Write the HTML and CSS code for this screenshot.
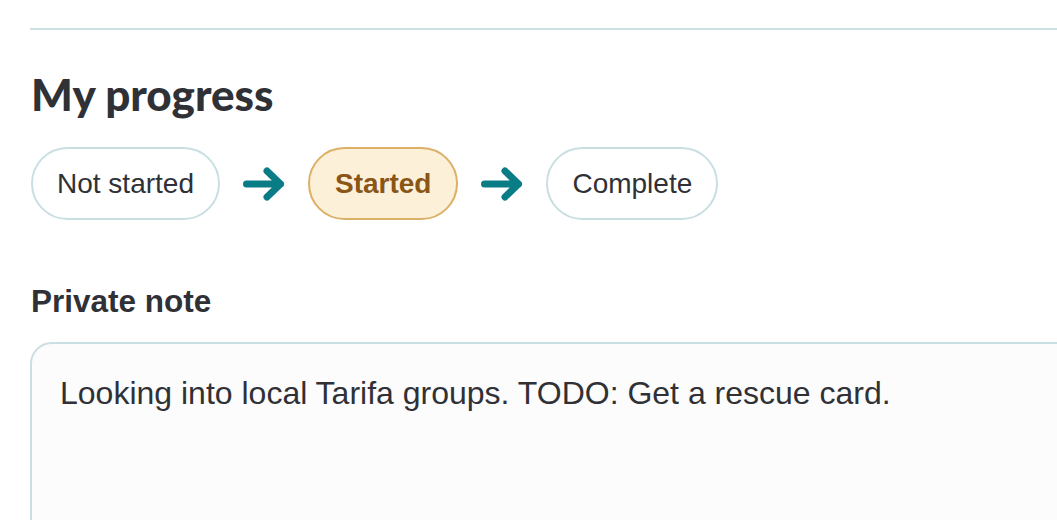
FILE: index.html
```html
<!DOCTYPE html>
<html lang="en">
  <head>
    <meta charset="utf-8">
    <title>My progress</title>
    <link rel="stylesheet" href="styles.css">
  </head>
  <body>
    <div class="page">
      <hr class="divider">

      <h2 class="title">My progress</h2>

      <div class="steps">
        <button class="step">Not started</button>
        <svg class="arrow" width="42" height="34" viewBox="0 0 42 34">
          <path d="M3.5 17 H37.5 M24 4 L37.5 17 L24 30" fill="none" stroke="#0a7c86" stroke-width="7" stroke-linecap="round" stroke-linejoin="round"/>
        </svg>
        <button class="step current">Started</button>
        <svg class="arrow" width="42" height="34" viewBox="0 0 42 34">
          <path d="M3.5 17 H37.5 M24 4 L37.5 17 L24 30" fill="none" stroke="#0a7c86" stroke-width="7" stroke-linecap="round" stroke-linejoin="round"/>
        </svg>
        <button class="step">Complete</button>
      </div>

      <label class="note-label" for="note">Private note</label>
      <textarea class="note" id="note" readonly>Looking into local Tarifa groups. TODO: Get a rescue card.</textarea>
    </div>
  </body>
</html>
```

FILE: styles.css
```css
html, body {
  margin: 0;
  background: #ffffff;
  overflow: hidden;
}

.page {
  display: flex;
  flex-direction: column;
  align-items: flex-start;
  padding-left: 30px;
  color: #303136;
  font-family: "Liberation Sans", Arial, sans-serif;
}

.divider {
  align-self: stretch;
  margin: 28px 0 0 0;
  border: 0;
  height: 2px;
  background: #cde0e3;
}

.title {
  margin: 38px 0 0 1px;
  font-family: Lato, sans-serif;
  font-weight: 900;
  font-size: 44px;
  line-height: 52px;
  color: #303136;
}

.steps {
  display: flex;
  align-items: center;
  gap: 23px;
  margin-top: 27px;
  margin-left: 1px;
}

.step {
  height: 73px;
  padding: 0 24px;
  border: 2px solid #c9dfe2;
  border-radius: 37px;
  background: #ffffff;
  color: #303136;
  font-family: "Liberation Sans", Arial, sans-serif;
  font-size: 28px;
}

.step.current {
  padding: 0 25px;
  background: #fdf0d9;
  border-color: #dcb066;
  color: #8a5616;
  font-weight: bold;
}

.arrow {
  display: block;
}

.note-label {
  margin-top: 61px;
  margin-left: 1px;
  font-size: 31.5px;
  line-height: 40px;
  font-weight: bold;
  color: #303136;
}

.note {
  box-sizing: border-box;
  margin-top: 21px;
  width: 1100px;
  height: 260px;
  padding: 28px 28px;
  border: 2px solid #c9dfe2;
  border-radius: 22px;
  background: #fcfcfc;
  color: #303136;
  font-family: "Liberation Sans", Arial, sans-serif;
  font-size: 32px;
  line-height: 42px;
  resize: none;
  outline: none;
}
```
